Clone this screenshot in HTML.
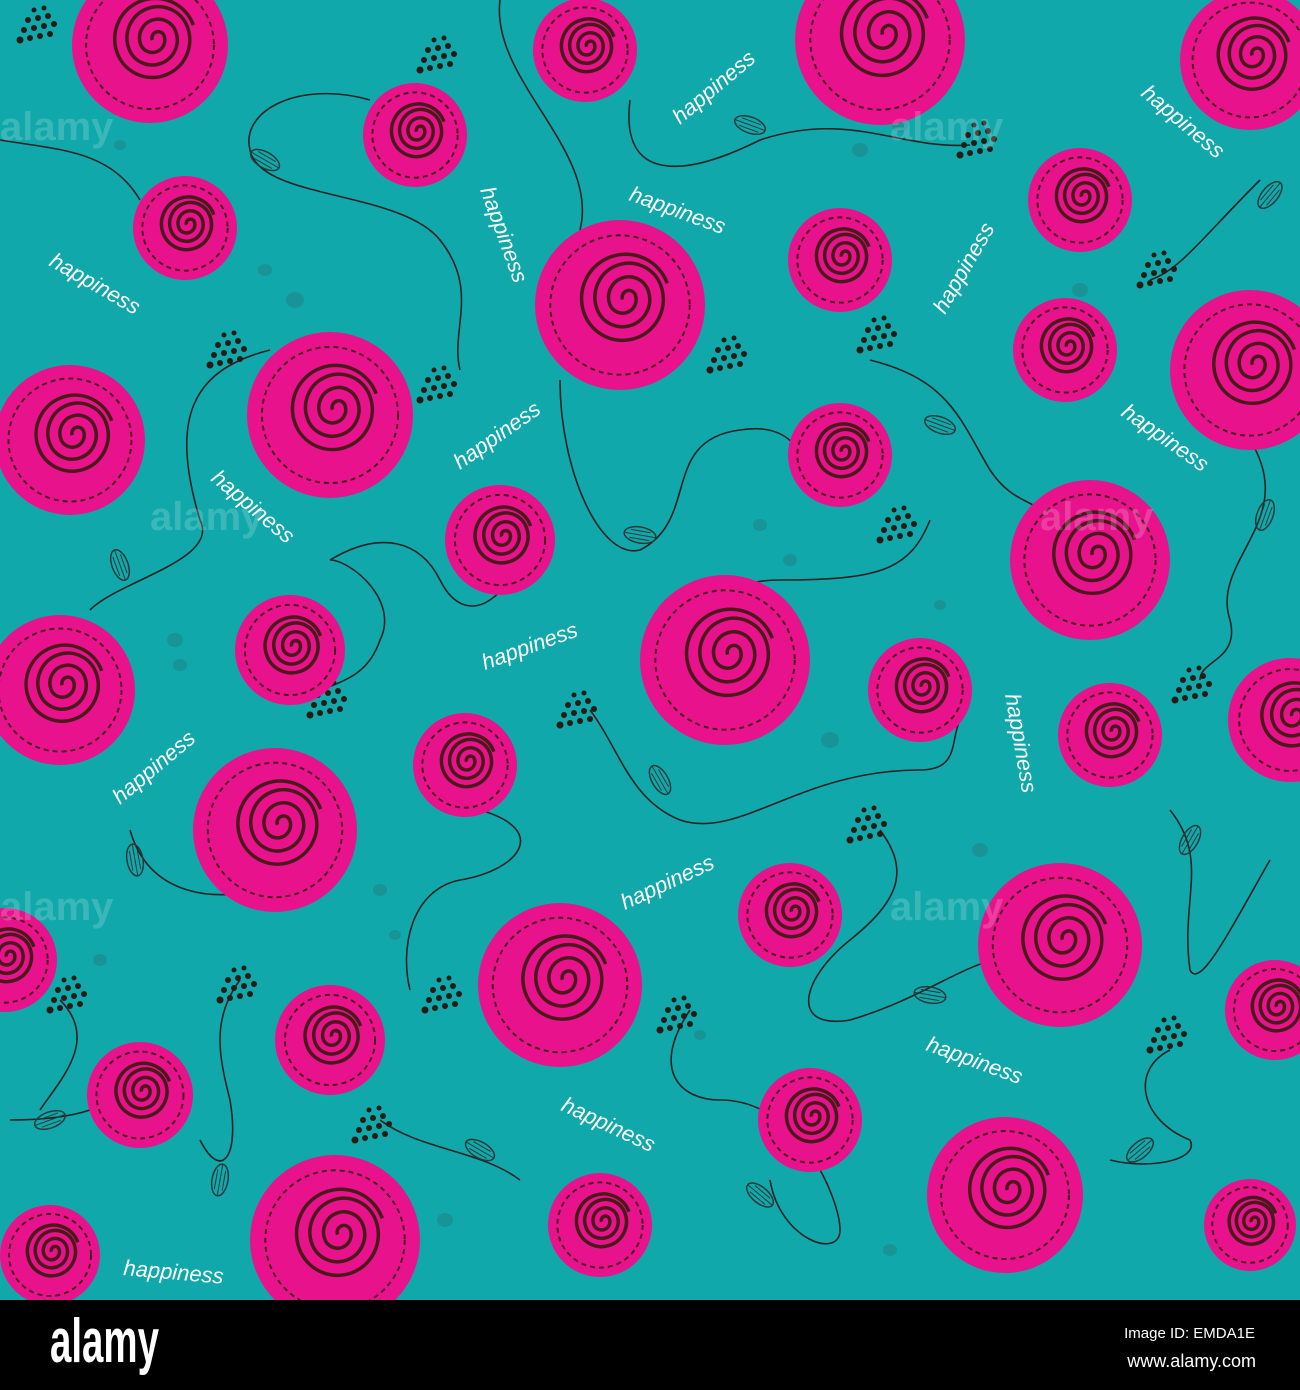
<!DOCTYPE html>
<html><head><meta charset="utf-8"><style>
html,body{margin:0;padding:0;background:#000;}
svg{display:block}
</style></head><body>
<svg width="1300" height="1390" viewBox="0 0 1300 1390" xmlns="http://www.w3.org/2000/svg">
<defs>
<g id="rose">
<circle r="1" fill="#e8128c"/>
<circle r="0.82" fill="none" stroke="#4a1a1a" stroke-width="2" stroke-dasharray="5 4" vector-effect="non-scaling-stroke"/>
<path d="M0,0 a.08,.08 0 0 1 .16,0 a.16,.16 0 0 1 -.32,0 a.24,.24 0 0 1 .48,0 a.32,.32 0 0 1 -.64,0 a.4,.4 0 0 1 .8,0 a.48,.48 0 0 1 -.96,0 a.52,.52 0 0 1 1.04,0" fill="none" stroke="#4a1a1a" stroke-width="3.5" vector-effect="non-scaling-stroke" transform="rotate(-20) translate(0.05,-0.05)"/>
</g>
<g id="seed" fill="#2a1a14">
<circle cx="0" cy="0" r="3.5"/><circle cx="10" cy="-2" r="3"/><circle cx="20" cy="-4" r="3"/><circle cx="30" cy="-6" r="3"/>
<circle cx="4" cy="-10" r="3"/><circle cx="14" cy="-12" r="3"/><circle cx="24" cy="-14" r="3"/><circle cx="34" cy="-16" r="3"/>
<circle cx="8" cy="-20" r="3"/><circle cx="18" cy="-22" r="3"/><circle cx="28" cy="-24" r="3"/>
<circle cx="14" cy="-30" r="2.5"/><circle cx="24" cy="-32" r="2.5"/>
</g>
<g id="leaf"><ellipse rx="16" ry="8" fill="none" stroke="#2a3a3a" stroke-width="1.5"/><path d="M-16,0 L16,0 M-10,-4 L10,-4 M-10,4 L10,4" stroke="#2a3a3a" stroke-width="1"/></g>
</defs>
<rect width="1300" height="1300" fill="#10a8aa"/>
<g fill="#1a8f92" opacity="0.8">
<ellipse cx="120" cy="145" rx="6" ry="5"/><ellipse cx="265" cy="270" rx="7" ry="6"/><ellipse cx="295" cy="300" rx="9" ry="8"/><ellipse cx="860" cy="150" rx="8" ry="7"/><ellipse cx="900" cy="125" rx="8" ry="7"/><ellipse cx="760" cy="525" rx="7" ry="6"/><ellipse cx="790" cy="560" rx="7" ry="6"/><ellipse cx="830" cy="740" rx="9" ry="8"/><ellipse cx="175" cy="640" rx="8" ry="7"/><ellipse cx="180" cy="665" rx="7" ry="6"/><ellipse cx="380" cy="890" rx="7" ry="6"/><ellipse cx="395" cy="935" rx="6" ry="5"/><ellipse cx="980" cy="850" rx="8" ry="7"/><ellipse cx="100" cy="960" rx="7" ry="6"/><ellipse cx="445" cy="1220" rx="8" ry="7"/><ellipse cx="1080" cy="290" rx="8" ry="7"/><ellipse cx="940" cy="605" rx="6" ry="5"/><ellipse cx="700" cy="1035" rx="6" ry="5"/><ellipse cx="890" cy="1250" rx="7" ry="6"/>
</g>
<g fill="none" stroke="#2a2222" stroke-width="1.6">
<path d="M370,100 C300,80 240,110 250,150 C260,200 400,190 440,240 C480,290 450,330 460,370"/>
<path d="M500,0 C490,80 600,150 580,230"/>
<path d="M630,100 C620,180 680,180 760,140 C850,110 900,150 970,145"/>
<path d="M0,140 C60,150 110,150 140,200"/>
<path d="M270,350 C190,370 170,420 200,520 C220,560 120,580 90,610"/>
<path d="M560,380 C560,470 600,560 640,550 C700,520 660,440 740,430 C800,420 810,470 800,480"/>
<path d="M870,360 C950,380 960,420 990,470 C1010,500 1030,500 1040,510"/>
<path d="M1260,180 C1200,240 1180,270 1150,280"/>
<path d="M1250,440 C1300,520 1210,560 1230,620 C1240,660 1200,660 1200,680"/>
<path d="M330,560 C380,530 420,540 440,580 C470,640 520,580 510,560"/>
<path d="M320,690 C350,680 370,670 380,640 C400,600 350,560 330,560"/>
<path d="M930,520 C910,570 880,580 780,580 C730,580 720,600 710,610"/>
<path d="M590,710 C620,750 630,800 680,820 C740,840 800,770 920,770 C960,770 950,740 960,720"/>
<path d="M480,810 C550,830 520,870 460,880 C410,890 400,950 410,990"/>
<path d="M880,830 C910,870 900,900 850,940 C800,980 790,1030 850,1020 C920,1000 970,960 1000,960"/>
<path d="M1170,810 C1210,860 1180,900 1190,970 C1200,990 1230,930 1270,860"/>
<path d="M130,830 C150,900 220,900 260,890"/>
<path d="M240,980 C210,1020 220,1060 230,1100 C240,1160 220,1180 200,1140"/>
<path d="M60,1000 C100,1040 60,1080 40,1110"/>
<path d="M690,1010 C650,1070 680,1100 720,1100 C800,1100 840,1200 840,1230 C840,1260 780,1240 770,1180"/>
<path d="M1170,1050 C1130,1070 1140,1120 1190,1140 C1200,1160 1150,1170 1110,1160"/>
<path d="M380,1120 C420,1150 480,1150 520,1180"/>
<path d="M90,1110 C60,1120 20,1120 10,1120"/>
</g>
<g>
<use href="#leaf" transform="translate(265,160) rotate(30)"/>
<use href="#leaf" transform="translate(750,125) rotate(20)"/>
<use href="#leaf" transform="translate(1270,195) rotate(-50)"/>
<use href="#leaf" transform="translate(640,535) rotate(10)"/>
<use href="#leaf" transform="translate(940,425) rotate(20)"/>
<use href="#leaf" transform="translate(1265,515) rotate(-70)"/>
<use href="#leaf" transform="translate(120,565) rotate(70)"/>
<use href="#leaf" transform="translate(660,780) rotate(60)"/>
<use href="#leaf" transform="translate(135,860) rotate(80)"/>
<use href="#leaf" transform="translate(930,995) rotate(10)"/>
<use href="#leaf" transform="translate(1190,840) rotate(-60)"/>
<use href="#leaf" transform="translate(220,1180) rotate(-80)"/>
<use href="#leaf" transform="translate(50,1120) rotate(-20)"/>
<use href="#leaf" transform="translate(760,1195) rotate(40)"/>
<use href="#leaf" transform="translate(1140,1150) rotate(-40)"/>
<use href="#leaf" transform="translate(480,1150) rotate(30)"/>
</g>
<g>
<use href="#seed" transform="translate(20,40)"/>
<use href="#seed" transform="translate(420,70)"/>
<use href="#seed" transform="translate(960,155)"/>
<use href="#seed" transform="translate(1140,285)"/>
<use href="#seed" transform="translate(210,365)"/>
<use href="#seed" transform="translate(420,400)"/>
<use href="#seed" transform="translate(710,370)"/>
<use href="#seed" transform="translate(860,350)"/>
<use href="#seed" transform="translate(880,540)"/>
<use href="#seed" transform="translate(1175,700)"/>
<use href="#seed" transform="translate(310,715)"/>
<use href="#seed" transform="translate(560,725)"/>
<use href="#seed" transform="translate(850,840)"/>
<use href="#seed" transform="translate(220,1000)"/>
<use href="#seed" transform="translate(425,1010)"/>
<use href="#seed" transform="translate(660,1030)"/>
<use href="#seed" transform="translate(50,1010)"/>
<use href="#seed" transform="translate(355,1140)"/>
<use href="#seed" transform="translate(1150,1050)"/>
</g>
<g>
<use href="#rose" transform="translate(150,45) scale(78)"/>
<use href="#rose" transform="translate(415,135) scale(52)"/>
<use href="#rose" transform="translate(185,228) scale(52)"/>
<use href="#rose" transform="translate(585,50) scale(52)"/>
<use href="#rose" transform="translate(880,40) scale(85)"/>
<use href="#rose" transform="translate(1250,60) scale(70)"/>
<use href="#rose" transform="translate(620,305) scale(85)"/>
<use href="#rose" transform="translate(840,260) scale(52)"/>
<use href="#rose" transform="translate(1080,200) scale(52)"/>
<use href="#rose" transform="translate(1065,350) scale(52)"/>
<use href="#rose" transform="translate(1250,370) scale(80)"/>
<use href="#rose" transform="translate(330,415) scale(83)"/>
<use href="#rose" transform="translate(70,440) scale(75)"/>
<use href="#rose" transform="translate(500,540) scale(55)"/>
<use href="#rose" transform="translate(840,455) scale(52)"/>
<use href="#rose" transform="translate(1090,560) scale(80)"/>
<use href="#rose" transform="translate(290,650) scale(55)"/>
<use href="#rose" transform="translate(60,690) scale(75)"/>
<use href="#rose" transform="translate(725,660) scale(85)"/>
<use href="#rose" transform="translate(920,690) scale(52)"/>
<use href="#rose" transform="translate(465,765) scale(52)"/>
<use href="#rose" transform="translate(1110,735) scale(52)"/>
<use href="#rose" transform="translate(1290,720) scale(62)"/>
<use href="#rose" transform="translate(275,830) scale(82)"/>
<use href="#rose" transform="translate(5,960) scale(52)"/>
<use href="#rose" transform="translate(560,985) scale(82)"/>
<use href="#rose" transform="translate(790,915) scale(52)"/>
<use href="#rose" transform="translate(1060,945) scale(82)"/>
<use href="#rose" transform="translate(1275,1010) scale(50)"/>
<use href="#rose" transform="translate(330,1040) scale(55)"/>
<use href="#rose" transform="translate(140,1095) scale(53)"/>
<use href="#rose" transform="translate(810,1120) scale(52)"/>
<use href="#rose" transform="translate(1005,1195) scale(78)"/>
<use href="#rose" transform="translate(335,1240) scale(85)"/>
<use href="#rose" transform="translate(600,1225) scale(52)"/>
<use href="#rose" transform="translate(50,1255) scale(50)"/>
<use href="#rose" transform="translate(1250,1225) scale(46)"/>
</g>
<g fill="#ffffff" font-family="'Liberation Sans', sans-serif" font-size="22" font-style="italic">
<text transform="translate(48,265) rotate(30)">happiness</text>
<text transform="translate(680,125) rotate(-40)">happiness</text>
<text transform="translate(1140,95) rotate(40)">happiness</text>
<text transform="translate(480,190) rotate(70)">happiness</text>
<text transform="translate(628,200) rotate(20)">happiness</text>
<text transform="translate(945,315) rotate(-60)">happiness</text>
<text transform="translate(460,470) rotate(-35)">happiness</text>
<text transform="translate(1120,415) rotate(35)">happiness</text>
<text transform="translate(210,480) rotate(40)">happiness</text>
<text transform="translate(485,670) rotate(-20)">happiness</text>
<text transform="translate(1005,695) rotate(80)">happiness</text>
<text transform="translate(120,805) rotate(-40)">happiness</text>
<text transform="translate(625,910) rotate(-25)">happiness</text>
<text transform="translate(925,1050) rotate(20)">happiness</text>
<text transform="translate(560,1110) rotate(25)">happiness</text>
<text transform="translate(123,1275) rotate(5)">happiness</text>
</g>
<g fill="#ffffff" opacity="0.18" font-family="'Liberation Sans', sans-serif" font-weight="bold" font-size="40">
<text x="0" y="140">alamy</text><text x="890" y="140">alamy</text><text x="150" y="530">alamy</text><text x="1040" y="530">alamy</text><text x="0" y="920">alamy</text><text x="890" y="920">alamy</text>
</g>
<rect y="1300" width="1300" height="90" fill="#000"/>
<text fill="#fff" font-family="'Liberation Sans', sans-serif" font-weight="bold" font-size="62" transform="translate(50,1362) scale(0.62,1)">alamy</text>
<text x="1255" y="1338" fill="#fff" text-anchor="end" font-family="'Liberation Sans', sans-serif" font-size="15">Image ID: EMDA1E</text>
<text x="1256" y="1367" fill="#fff" text-anchor="end" font-family="'Liberation Sans', sans-serif" font-size="18">www.alamy.com</text>
</svg>
</body></html>
